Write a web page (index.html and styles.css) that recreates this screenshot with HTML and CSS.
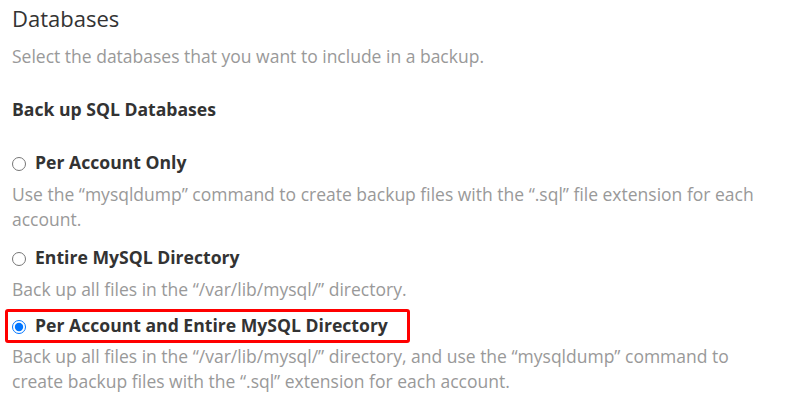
FILE: index.html
```html
<!DOCTYPE html>
<html>
<head>
<meta charset="utf-8">
<link rel="stylesheet" href="styles.css">
</head>
<body>
<div class="page">
  <h2 class="title">Databases</h2>
  <p class="intro">Select the databases that you want to include in a backup.</p>
  <h3 class="heading">Back up SQL Databases</h3>
  <div class="option first">
    <label class="opt-label"><input type="radio" name="db" class="radio"> Per Account Only</label>
    <p class="help">Use the “mysqldump” command to create backup files with the “.sql” file extension for each account.</p>
  </div>
  <div class="option">
    <label class="opt-label"><input type="radio" name="db" class="radio"> Entire MySQL Directory</label>
    <p class="help">Back up all files in the “/var/lib/mysql/” directory.</p>
  </div>
  <div class="option selected">
    <label class="opt-label highlight"><input type="radio" name="db" class="radio" checked> Per Account and Entire MySQL Directory</label>
    <p class="help">Back up all files in the “/var/lib/mysql/” directory, and use the “mysqldump” command to create backup files with the “.sql” extension for each account.</p>
  </div>
</div>
</body>
</html>
```
FILE: styles.css
```css
html, body {
  margin: 0;
  padding: 0;
  background: #fff;
}
.page {
  font-family: "Open Sans", "Liberation Sans", sans-serif;
  padding: 3px 12px 0 12px;
  width: 770px;
}
.title {
  font-size: 22px;
  font-weight: 400;
  color: #333;
  margin: 0;
  line-height: 30px;
}
.intro {
  font-size: 17.5px;
  color: #999;
  margin: 11px 0 0 0;
  line-height: 25px;
}
.heading {
  font-size: 17.6px;
  font-weight: 700;
  color: #333;
  margin: 28px 0 0 0;
  line-height: 25px;
}
.opt-label {
  display: flex;
  align-items: center;
  font-size: 17.6px;
  font-weight: 700;
  color: #333;
  line-height: 25px;
  margin-top: 13px;
}
.first .opt-label {
  margin-top: 28px;
}
.radio {
  margin: 2px 9px 0 0;
  width: 14px;
  height: 14px;
  flex: none;
}
.help {
  font-size: 17.5px;
  color: #999;
  margin: 7px 0 0 0;
  line-height: 25px;
}
.highlight {
  box-sizing: border-box;
  width: 405px;
  border: 3px solid #f00;
  border-radius: 3px;
  margin: 7px 0 0 -7px;
  padding: 1px 0 2px 4px;
}
.selected .help {
  margin-top: 1px;
}
```
